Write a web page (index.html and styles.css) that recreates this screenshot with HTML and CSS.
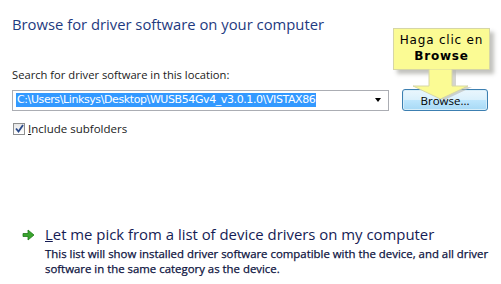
FILE: index.html
```html
<!DOCTYPE html>
<html lang="en">
<head>
    <meta charset="UTF-8">
    <title>Update Driver Software</title>
    <link rel="stylesheet" href="styles.css">
</head>
<body>
    <div class="page">
        <h1>Browse for driver software on your computer</h1>

        <div class="label">Search for driver software in this location:</div>
        <div class="row">
            <div class="combo">
                <span class="path">C:\Users\Linksys\Desktop\WUSB54Gv4_v3.0.1.0\VISTAX86</span>
                <span class="drop"></span>
            </div>
            <button class="browse">Browse...</button>
        </div>
        <label class="check">
            <span class="box">
                <svg width="9" height="9" viewBox="0 0 9 9"><path d="M1 4.5 L3.5 7.5 L8 1" fill="none" stroke="#2a4a8a" stroke-width="1.8"/></svg>
            </span>
            <span><u>I</u>nclude subfolders</span>
        </label>

        <div class="command">
            <svg class="go" width="13" height="12" viewBox="0 0 13 12">
                <path d="M1 4.5 H6 V1 L12 6 L6 11 V7.5 H1 Z" fill="#3aa52e" stroke="#1f7a1a" stroke-width="0.8" stroke-linejoin="round"/>
            </svg>
            <div>
                <div class="cmd-title"><u>L</u>et me pick from a list of device drivers on my computer</div>
                <div class="cmd-desc">This list will show installed driver software compatible with the device, and all driver software in the same category as the device.</div>
            </div>
        </div>
    </div>

    <div class="callout">
        <div class="bubble">Haga clic en<br><b>Browse</b></div>
        <svg class="pointer" width="60" height="32" viewBox="0 0 60 32">
            <path d="M16 0 H39 V17 H55 L27.5 30 L0 17 H16 Z" fill="#b8b8b0" transform="translate(4 1)" opacity="0.6"/>
            <path d="M16 0 H39 V17 H55 L27.5 30 L0 17 H16 Z" fill="#fbfb94" stroke="#d6d6a6"/>
        </svg>
    </div>
</body>
</html>
```

FILE: styles.css
```css
body {
    margin: 0;
    background: #ffffff;
    font-family: 'Open Sans', 'Noto Sans', sans-serif;
    color: #151c55;
}
.page {
    padding: 13px 12px 0;
    width: 477px;
}
h1 {
    margin: 0;
    font-size: 14.8px;
    font-weight: normal;
    line-height: 22px;
    color: #1e3a80;
}
.label {
    margin-top: 32px;
    font-size: 11.2px;
    line-height: 16px;
    color: #1a1a1a;
}
.row {
    display: flex;
    align-items: center;
    margin-top: 6px;
}
.combo {
    box-sizing: border-box;
    width: 377px;
    height: 21px;
    border: 1px solid #abadb3;
    display: flex;
    align-items: center;
    padding: 0 3px;
}
.path {
    background: #3399ff;
    color: #ffffff;
    font-family: 'DejaVu Sans', sans-serif;
    font-size: 11px;
    line-height: 14px;
    padding: 0 1px;
    letter-spacing: -0.4px;
}
.drop {
    margin-left: auto;
    margin-right: 4px;
    width: 0;
    height: 0;
    border-left: 3.5px solid transparent;
    border-right: 3.5px solid transparent;
    border-top: 4px solid #000000;
}
.browse {
    margin-left: 13px;
    width: 86px;
    height: 22px;
    border: 1px solid #3c7fb1;
    border-radius: 3px;
    background: linear-gradient(#eaf6fd 0%, #d9f0fc 50%, #bee6fd 51%, #a7d9f5 100%);
    box-shadow: inset 0 0 0 1px #d8eef9;
    font-family: 'Open Sans', sans-serif;
    font-size: 11.5px;
    color: #000000;
    padding: 0;
}
.check {
    display: flex;
    align-items: center;
    margin-top: 10px;
    font-size: 11.5px;
    color: #1a1a1a;
}
.box {
    box-sizing: border-box;
    width: 12px;
    height: 12px;
    border: 1px solid #8e8f8f;
    background: linear-gradient(#e6e6e6, #ffffff);
    margin: 0 3px 0 1px;
    display: flex;
    align-items: center;
    justify-content: center;
}
.command {
    display: flex;
    margin-top: 88px;
    padding-left: 10px;
}
.go {
    margin-top: 5px;
    margin-right: 10px;
    flex: none;
}
.cmd-title {
    font-size: 14.9px;
    line-height: 20px;
    color: #151c55;
}
.cmd-desc {
    font-size: 11.4px;
    line-height: 15px;
    font-weight: normal;
    color: #0c1240;
    -webkit-text-stroke: 0.25px #0c1240;
    margin-top: 2px;
}
.callout {
    position: absolute;
    left: 393px;
    top: 28px;
    width: 100px;
}
.bubble {
    box-sizing: border-box;
    width: 97px;
    height: 42px;
    background: #fbfb94;
    border: 1px solid #d6d6a6;
    box-shadow: 4px 4px 4px rgba(120, 120, 110, 0.45);
    font-family: 'DejaVu Sans', sans-serif;
    font-size: 12px;
    line-height: 16px;
    letter-spacing: 0.8px;
    text-align: center;
    color: #000000;
    padding-top: 3px;
}
.pointer {
    position: absolute;
    left: 20px;
    top: 41px;
}
```
